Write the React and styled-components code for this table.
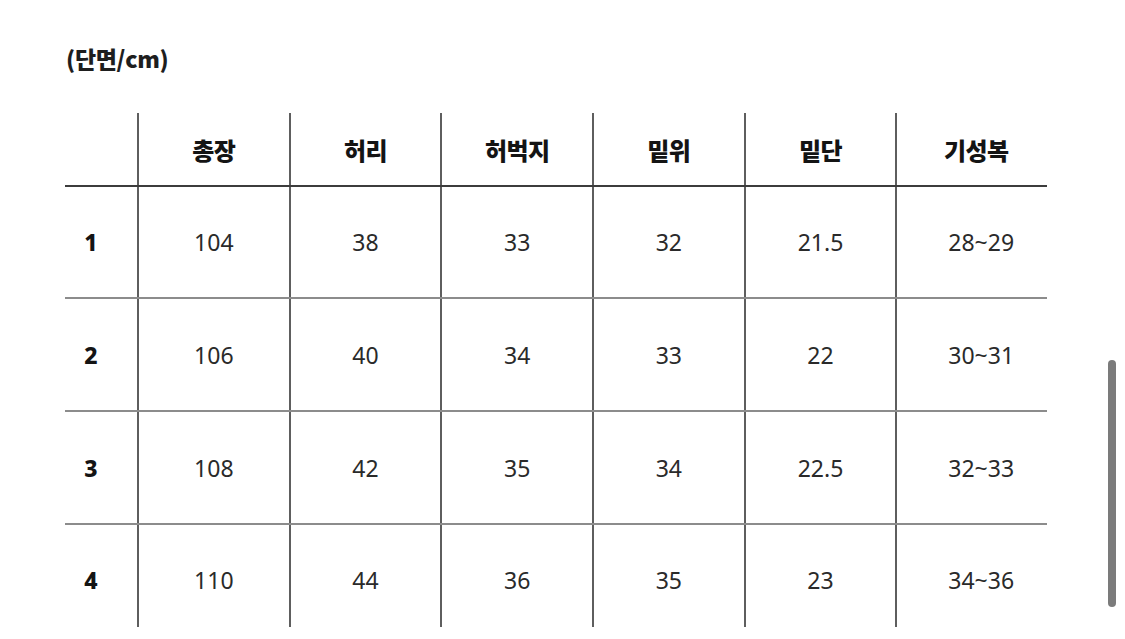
import React from "react";
import styled, { createGlobalStyle } from "styled-components";

const Global = createGlobalStyle`
  html, body { margin: 0; padding: 0; background: #fff; }
  body { font-family: "Noto Sans", "Noto Sans CJK KR", sans-serif; color: #222; }
`;

const Page = styled.div`
  position: relative;
  width: 1125px;
  height: 639px;
  overflow: hidden;
  background: #fff;
  padding-left: 65px;
  box-sizing: border-box;
`;

const Title = styled.div`
  margin: 44px 0 0 1px;
  height: 28px;
  line-height: 28px;
  font-family: "Noto Sans CJK KR", "Noto Sans", sans-serif;
  font-weight: 900;
  font-size: 23px;
  color: #1e1e1e;
  letter-spacing: -0.3px;
`;

const Table = styled.div`
  margin-top: 41px;
  width: 982px;
  display: flex;
  flex-direction: column;
`;

const Row = styled.div`
  display: grid;
  grid-template-columns: 72px repeat(6, 1fr);
  box-sizing: border-box;
  height: ${(p) => p.$h}px;
  border-bottom: ${(p) =>
    p.$kind === "header" ? "2px solid #3c3c3c" : p.$kind === "last" ? "none" : "2px solid #8c8c8c"};
`;

const Cell = styled.div`
  display: flex;
  align-items: center;
  justify-content: center;
  box-sizing: border-box;
  border-left: ${(p) => (p.$first ? "none" : "2px solid #5e5e5e")};
  padding-right: ${(p) => (p.$first ? 20 : 0)}px;
  padding-left: ${(p) => p.$shift || 0}px;
  padding-top: ${(p) => p.$down || 0}px;
  font-family: ${(p) =>
    p.$head ? `"Noto Sans CJK KR", "Noto Sans", sans-serif` : `"Noto Sans", "Noto Sans CJK KR", sans-serif`};
  font-size: ${(p) => (p.$head ? 24 : 23)}px;
  font-weight: ${(p) => (p.$head ? 900 : p.$bold ? 800 : 400)};
  color: ${(p) => (p.$bold ? "#141414" : "#2a2a2a")};
  letter-spacing: ${(p) => (p.$head ? "-0.6px" : "0")};
`;

const Scrollbar = styled.div`
  position: absolute;
  left: 1108px;
  top: 360px;
  width: 8px;
  height: 247px;
  border-radius: 4px;
  background: #7b7b7b;
`;

const headers = ["총장", "허리", "허벅지", "밑위", "밑단", "기성복"];
const rows = [
  ["1", "104", "38", "33", "32", "21.5", "28~29"],
  ["2", "106", "40", "34", "33", "22", "30~31"],
  ["3", "108", "42", "35", "34", "22.5", "32~33"],
  ["4", "110", "44", "36", "35", "23", "34~36"],
];
const heights = [112, 113, 113, 102];

export default function App() {
  return (
    <>
      <Global />
      <Page>
        <Title>(단면/cm)</Title>
        <Table>
          <Row $kind="header" $h={74}>
            <Cell $first $head $bold />
            {headers.map((h, i) => (
              <Cell key={h} $head $bold $shift={i === 5 ? 8 : 0}>
                {h}
              </Cell>
            ))}
          </Row>
          {rows.map((r, ri) => (
            <Row key={ri} $kind={ri === 3 ? "last" : "data"} $h={heights[ri]}>
              {r.map((v, ci) => (
                <Cell
                  key={ci}
                  $first={ci === 0}
                  $bold={ci === 0}
                  $shift={ci === 6 ? 18 : 0}
                  $down={ri === 3 ? 8 : 0}
                >
                  {v}
                </Cell>
              ))}
            </Row>
          ))}
        </Table>
        <Scrollbar />
      </Page>
    </>
  );
}
